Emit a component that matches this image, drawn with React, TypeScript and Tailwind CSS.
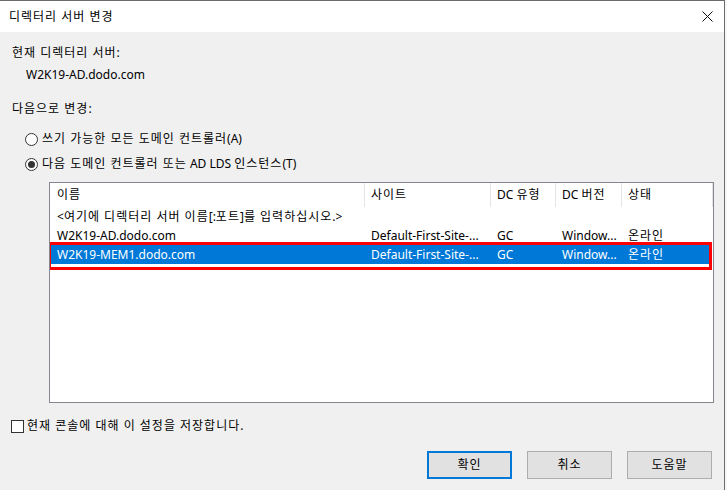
import React from "react";

type Row = { name: string; site: string; type: string; ver: string; state: string };

const rows: Row[] = [
  { name: "W2K19-AD.dodo.com", site: "Default-First-Site-...", type: "GC", ver: "Window...", state: "온라인" },
  { name: "W2K19-MEM1.dodo.com", site: "Default-First-Site-...", type: "GC", ver: "Window...", state: "온라인" },
];

// 열 너비 (이름 / 사이트 / DC 유형 / DC 버전 / 상태)
const cols = ["w-[315px]", "w-[126px]", "w-[65px]", "w-[66px]", "w-[91px]"];

// 한글 부분만 자간을 넓혀 Malgun Gothic 폭에 맞춤
function K({ t }: { t: string }) {
  const parts = t.split(/([가-힣]+(?:\s+[가-힣]+)*)/);
  return (
    <>
      {parts.map((p, i) =>
        /[가-힣]/.test(p) ? (
          <span key={i} className="tracking-[1px]">
            {p}
          </span>
        ) : (
          <React.Fragment key={i}>{p}</React.Fragment>
        )
      )}
    </>
  );
}

function Radio({ checked }: { checked?: boolean }) {
  return (
    <span className="w-[13px] h-[13px] rounded-full border border-[#333] bg-white flex items-center justify-center shrink-0">
      {checked && <span className="w-[7px] h-[7px] rounded-full bg-[#333]" />}
    </span>
  );
}

function DialogButton({ label, primary }: { label: string; primary?: boolean }) {
  return (
    <button
      className={
        "w-[85px] h-[28px] bg-[#e1e1e1] text-[12px] text-black flex items-center justify-center " +
        (primary ? "border-2 border-[#0078d7]" : "border border-[#adadad]")
      }
    >
      <K t={label} />
    </button>
  );
}

export default function App() {
  return (
    <div className="w-[727px] h-[490px] bg-[#f8f8f8] overflow-hidden font-[Noto_Sans,Noto_Sans_CJK_KR,sans-serif] text-[12px] text-black">
      <div className="w-[725px] h-[490px] bg-[#f0f0f0] border-t border-r border-[#6b6b6b] flex flex-col">
        {/* 제목 표시줄 */}
        <div className="h-[31px] bg-white flex items-center justify-between pl-[9px] pr-[10px]">
          <span className="text-[12px] leading-[16px]">
            <K t="디렉터리 서버 변경" />
          </span>
          <svg width="11" height="11" viewBox="0 0 11 11" className="mr-[1px]">
            <path d="M0.5 0.5 L10.5 10.5 M10.5 0.5 L0.5 10.5" stroke="#111" strokeWidth="1" />
          </svg>
        </div>

        <div className="pl-[12px] pt-[13px] leading-[16px]">
          <p>
            <K t="현재 디렉터리 서버:" />
          </p>
          <p className="pl-[14px] mt-[6px]">W2K19-AD.dodo.com</p>
          <p className="mt-[18px]">
            <K t="다음으로 변경:" />
          </p>

          <div className="pl-[13px] mt-[14px] flex items-center gap-[4px] h-[16px]">
            <Radio />
            <span>
              <K t="쓰기 가능한 모든 도메인 컨트롤러(A)" />
            </span>
          </div>
          <div className="pl-[13px] mt-[9px] flex items-center gap-[4px] h-[16px]">
            <Radio checked />
            <span>
              <K t="다음 도메인 컨트롤러 또는 AD LDS 인스턴스(T)" />
            </span>
          </div>
        </div>

        {/* 목록 */}
        <div className="ml-[49px] mt-[10px] w-[665px] h-[221px] border border-[#828790] bg-white relative overflow-hidden">
          <div className="flex h-[24px] items-center">
            {["이름", "사이트", "DC 유형", "DC 버전", "상태"].map((h, i) => (
              <div
                key={h}
                className={cols[i] + " shrink-0 h-full flex items-center border-r border-[#e5e5e5] " + (i === 0 ? "pl-[7px]" : "pl-[6px]")}
              >
                <span>
                  <K t={h} />
                </span>
              </div>
            ))}
          </div>
          <div className="h-[19px] flex items-center pl-[7px]">
            <span>
              <K t="<여기에 디렉터리 서버 이름[:포트]를 입력하십시오.>" />
            </span>
          </div>
          {rows.map((r, idx) => {
            const sel = idx === 1;
            return (
              <div
                key={r.name}
                className={"h-[19px] flex items-center overflow-hidden " + (sel ? "bg-[#0078d7] text-white w-[659px]" : "")}
              >
                <div className={cols[0] + " shrink-0 pl-[7px]"}>{r.name}</div>
                <div className={cols[1] + " shrink-0 pl-[6px]"}>{r.site}</div>
                <div className={cols[2] + " shrink-0 pl-[6px]"}>{r.type}</div>
                <div className={cols[3] + " shrink-0 pl-[6px]"}>{r.ver}</div>
                <div className={cols[4] + " shrink-0 pl-[6px]"}>
                  <K t={r.state} />
                </div>
              </div>
            );
          })}
          {/* 빨간 강조 표시 */}
          <div className="absolute left-[-2px] top-[59px] w-[664px] h-[28px] border-[3px] border-[#ff0000]" />
        </div>

        <div className="pl-[11px] mt-[15px] flex items-center gap-[3px] h-[16px]">
          <span className="w-[13px] h-[13px] border border-[#333] bg-white shrink-0" />
          <span>
            <K t="현재 콘솔에 대해 이 설정을 저장합니다." />
          </span>
        </div>

        <div className="mt-[17px] flex justify-end gap-[15px] pr-[12px]">
          <DialogButton label="확인" primary />
          <DialogButton label="취소" />
          <DialogButton label="도움말" />
        </div>
      </div>
    </div>
  );
}
